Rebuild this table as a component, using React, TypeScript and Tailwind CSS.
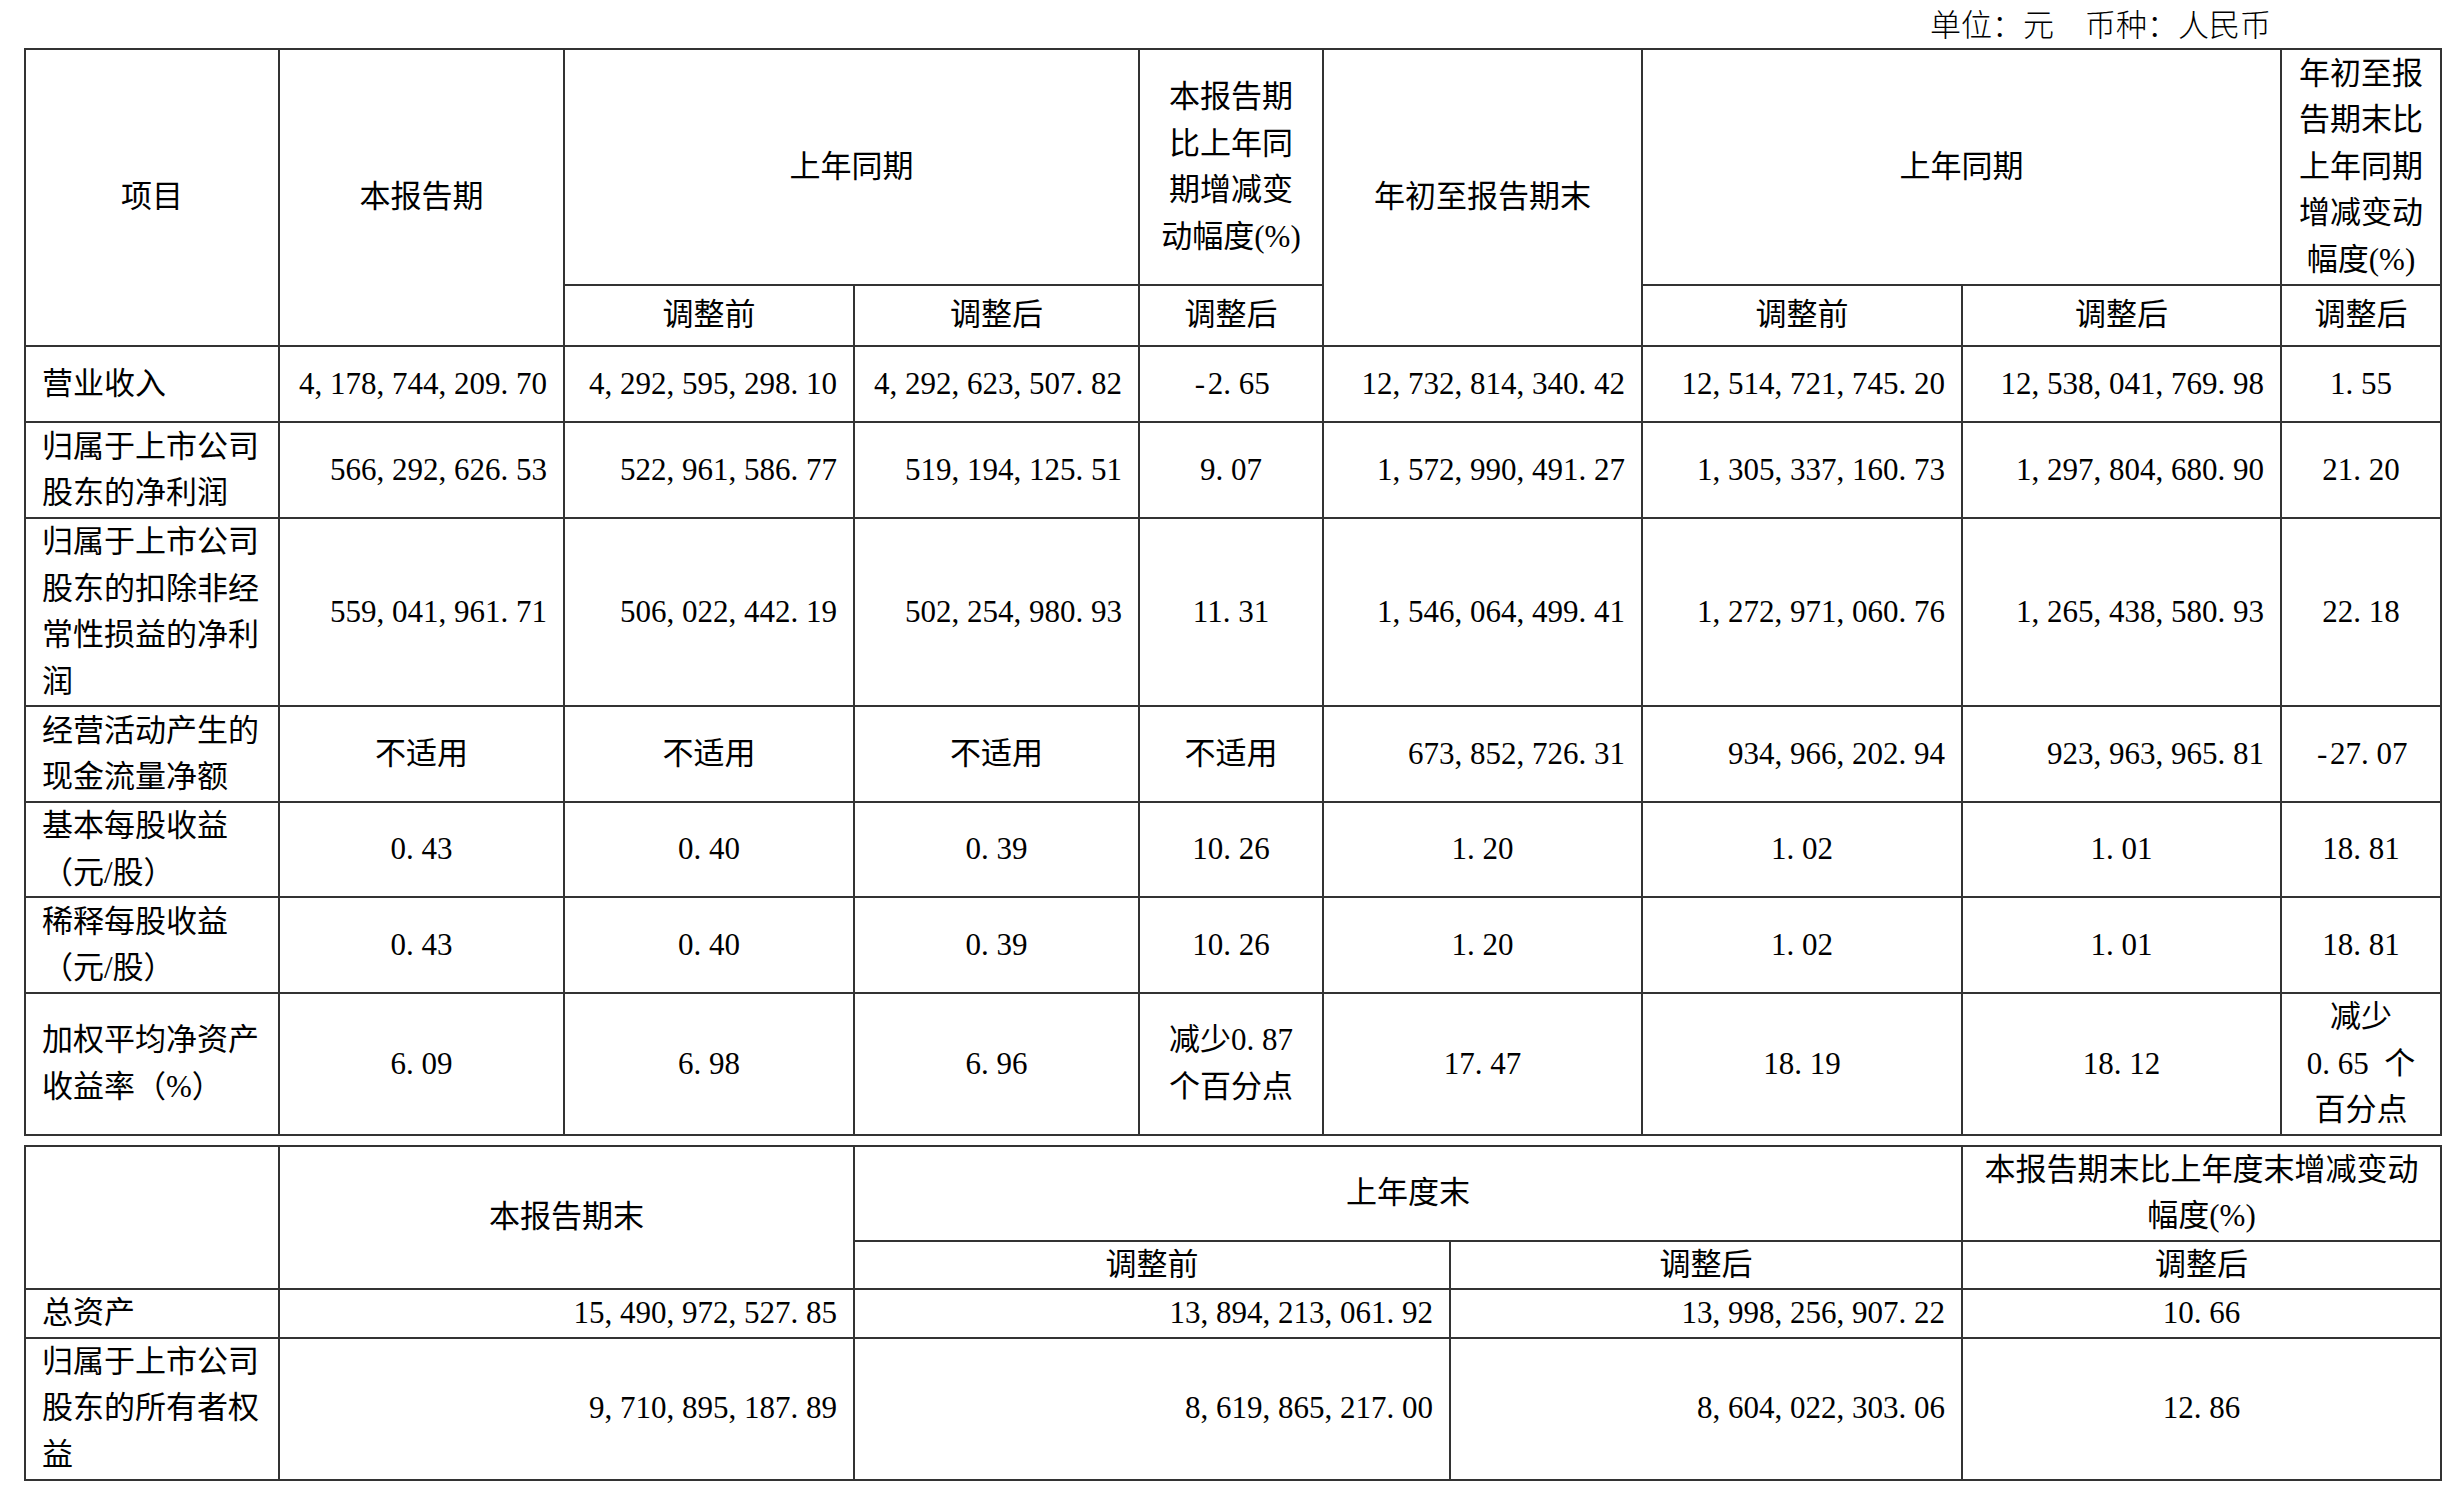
import React from "react";

const T = ({ s }: { s: string }) => {
  const parts = s.split(/([,.\- ])/);
  return (
    <>
      {parts.map((p, i) =>
        p === "" ? null : /^[,.\- ]$/.test(p) ? (
          <span
            key={i}
            className={
              p === "-"
                ? "inline-block w-[0.5em] text-center"
                : "inline-block w-[0.5em] text-left"
            }
          >
            {p === " " ? "\u00a0" : p}
          </span>
        ) : (
          <React.Fragment key={i}>{p}</React.Fragment>
        )
      )}
    </>
  );
};

const cell =
  "border-2 border-[#333] py-0 align-middle leading-[46.5px] whitespace-nowrap font-normal";
const L = cell + " text-left pl-[16px] pr-[4px]";
const C = cell + " text-center px-[4px]";
const R = cell + " text-right pr-[16px] pl-[4px]";

type Row = {
  label: React.ReactNode;
  h: string;
  vals: { v: React.ReactNode; a: "r" | "c" }[];
};

const r = (v: string) => ({ v: <T s={v} />, a: "r" as const });
const c = (v: string) => ({ v: <T s={v} />, a: "c" as const });
const cx = (v: React.ReactNode) => ({ v, a: "c" as const });

const rows: Row[] = [
  {
    label: "营业收入",
    h: "h-[76px]",
    vals: [
      r("4,178,744,209.70"),
      r("4,292,595,298.10"),
      r("4,292,623,507.82"),
      c("-2.65"),
      r("12,732,814,340.42"),
      r("12,514,721,745.20"),
      r("12,538,041,769.98"),
      c("1.55"),
    ],
  },
  {
    label: (
      <>
        归属于上市公司
        <br />
        股东的净利润
      </>
    ),
    h: "h-[96px]",
    vals: [
      r("566,292,626.53"),
      r("522,961,586.77"),
      r("519,194,125.51"),
      c("9.07"),
      r("1,572,990,491.27"),
      r("1,305,337,160.73"),
      r("1,297,804,680.90"),
      c("21.20"),
    ],
  },
  {
    label: (
      <>
        归属于上市公司
        <br />
        股东的扣除非经
        <br />
        常性损益的净利
        <br />润
      </>
    ),
    h: "h-[188px]",
    vals: [
      r("559,041,961.71"),
      r("506,022,442.19"),
      r("502,254,980.93"),
      c("11.31"),
      r("1,546,064,499.41"),
      r("1,272,971,060.76"),
      r("1,265,438,580.93"),
      c("22.18"),
    ],
  },
  {
    label: (
      <>
        经营活动产生的
        <br />
        现金流量净额
      </>
    ),
    h: "h-[96px]",
    vals: [
      cx("不适用"),
      cx("不适用"),
      cx("不适用"),
      cx("不适用"),
      r("673,852,726.31"),
      r("934,966,202.94"),
      r("923,963,965.81"),
      c("-27.07"),
    ],
  },
  {
    label: (
      <>
        基本每股收益
        <br />
        （元/股）
      </>
    ),
    h: "h-[94px]",
    vals: [
      c("0.43"),
      c("0.40"),
      c("0.39"),
      c("10.26"),
      c("1.20"),
      c("1.02"),
      c("1.01"),
      c("18.81"),
    ],
  },
  {
    label: (
      <>
        稀释每股收益
        <br />
        （元/股）
      </>
    ),
    h: "h-[96px]",
    vals: [
      c("0.43"),
      c("0.40"),
      c("0.39"),
      c("10.26"),
      c("1.20"),
      c("1.02"),
      c("1.01"),
      c("18.81"),
    ],
  },
  {
    label: (
      <>
        加权平均净资产
        <br />
        收益率（%）
      </>
    ),
    h: "h-[141px]",
    vals: [
      c("6.09"),
      c("6.98"),
      c("6.96"),
      cx(
        <>
          减少<T s="0.87" />
          <br />
          个百分点
        </>
      ),
      c("17.47"),
      c("18.19"),
      c("18.12"),
      cx(
        <>
          减少
          <br />
          <T s="0.65 " />个
          <br />
          百分点
        </>
      ),
    ],
  },
];

export default function App() {
  return (
    <div className="w-[2451px] h-[1485px] bg-white text-black font-['Liberation_Serif','Noto_Sans_CJK_SC',serif] text-[31px] font-light">
      <div className="h-[48px] flex items-center justify-end pr-[180px] pt-[4px] leading-[46.5px]">
        单位：元　币种：人民币
      </div>

      <table className="border-collapse table-fixed w-[2418px] ml-[24px]">
        <colgroup>
          <col className="w-[254px]" />
          <col className="w-[285px]" />
          <col className="w-[290px]" />
          <col className="w-[285px]" />
          <col className="w-[184px]" />
          <col className="w-[319px]" />
          <col className="w-[320px]" />
          <col className="w-[319px]" />
          <col className="w-[160px]" />
        </colgroup>
        <thead>
          <tr className="h-[236px]">
            <th rowSpan={2} className={C}>
              项目
            </th>
            <th rowSpan={2} className={C}>
              本报告期
            </th>
            <th colSpan={2} className={C}>
              上年同期
            </th>
            <th className={C}>
              本报告期
              <br />
              比上年同
              <br />
              期增减变
              <br />
              动幅度(%)
            </th>
            <th rowSpan={2} className={C}>
              年初至报告期末
            </th>
            <th colSpan={2} className={C}>
              上年同期
            </th>
            <th className={C}>
              年初至报
              <br />
              告期末比
              <br />
              上年同期
              <br />
              增减变动
              <br />
              幅度(%)
            </th>
          </tr>
          <tr className="h-[61px]">
            <th className={C}>调整前</th>
            <th className={C}>调整后</th>
            <th className={C}>调整后</th>
            <th className={C}>调整前</th>
            <th className={C}>调整后</th>
            <th className={C}>调整后</th>
          </tr>
        </thead>
        <tbody>
          {rows.map((row, i) => (
            <tr key={i} className={row.h}>
              <td className={L}>{row.label}</td>
              {row.vals.map((v, j) => (
                <td key={j} className={v.a === "r" ? R : C}>
                  {v.v}
                </td>
              ))}
            </tr>
          ))}
        </tbody>
      </table>

      <table className="border-collapse table-fixed w-[2418px] ml-[24px] mt-[9px]">
        <colgroup>
          <col className="w-[254px]" />
          <col className="w-[575px]" />
          <col className="w-[596px]" />
          <col className="w-[512px]" />
          <col className="w-[479px]" />
        </colgroup>
        <thead>
          <tr className="h-[94px]">
            <th rowSpan={2} className={C}></th>
            <th rowSpan={2} className={C}>
              本报告期末
            </th>
            <th colSpan={2} className={C}>
              上年度末
            </th>
            <th className={C}>
              本报告期末比上年度末增减变动
              <br />
              幅度(%)
            </th>
          </tr>
          <tr className="h-[48px]">
            <th className={C}>调整前</th>
            <th className={C}>调整后</th>
            <th className={C}>调整后</th>
          </tr>
        </thead>
        <tbody>
          <tr className="h-[48px]">
            <td className={L}>总资产</td>
            <td className={R}>
              <T s="15,490,972,527.85" />
            </td>
            <td className={R}>
              <T s="13,894,213,061.92" />
            </td>
            <td className={R}>
              <T s="13,998,256,907.22" />
            </td>
            <td className={C}>
              <T s="10.66" />
            </td>
          </tr>
          <tr className="h-[142px]">
            <td className={L}>
              归属于上市公司
              <br />
              股东的所有者权
              <br />益
            </td>
            <td className={R}>
              <T s="9,710,895,187.89" />
            </td>
            <td className={R}>
              <T s="8,619,865,217.00" />
            </td>
            <td className={R}>
              <T s="8,604,022,303.06" />
            </td>
            <td className={C}>
              <T s="12.86" />
            </td>
          </tr>
        </tbody>
      </table>
    </div>
  );
}
